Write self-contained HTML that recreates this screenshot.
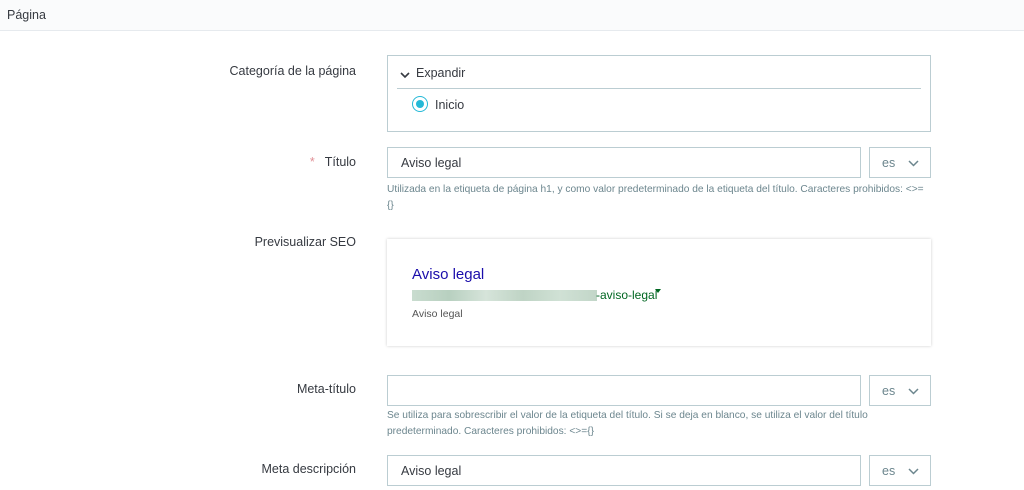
<!DOCTYPE html>
<html><head><meta charset="utf-8"><style>
body{margin:0;width:1024px;height:490px;overflow:hidden;background:#fff;font-family:"Liberation Sans",sans-serif;color:#363a41;position:relative}
.a{position:absolute}
.hdr{left:0;top:0;width:1024px;height:30px;background:#fafbfc;border-bottom:1px solid #e6eaee}
.lbl{right:668px;font-size:12.5px;text-align:right;white-space:nowrap}
.inp{left:387px;width:474px;height:31px;border:1px solid #bbcdd2;box-sizing:border-box;font-size:12.5px;padding:8px 0 0 13px}
.sel{left:869px;width:62px;height:31px;border:1px solid #bbcdd2;box-sizing:border-box;font-size:12.5px;padding:8px 0 0 12px;color:#6c868e}
.sel svg{position:absolute;left:38px;top:12px}
.help{left:387px;width:560px;font-size:10.2px;color:#6c868e;line-height:16px}
</style></head><body>
<div class="a hdr"><div class="a" style="left:7px;top:8px;font-size:12.5px">Página</div></div>

<div class="a lbl" style="top:64px">Categoría de la página</div>
<div class="a" style="left:387px;top:55px;width:544px;height:77px;border:1px solid #bbcdd2;box-sizing:border-box">
 <svg class="a" style="left:12px;top:15px" width="10" height="8" viewBox="0 0 10 8"><path d="M1 2l4 4 4-4" stroke="#363a41" stroke-width="1.6" fill="none"/></svg>
 <div class="a" style="left:28px;top:10px;font-size:12.5px">Expandir</div>
 <div class="a" style="left:9px;top:32px;width:524px;height:1px;background:#bbcdd2"></div>
 <div class="a" style="left:24px;top:40px;width:16px;height:16px;border:1.5px solid #25b9d7;border-radius:50%;box-sizing:border-box"></div>
 <div class="a" style="left:28px;top:44px;width:8px;height:8px;background:#25b9d7;border-radius:50%"></div>
 <div class="a" style="left:47px;top:42px;font-size:12.5px">Inicio</div>
</div>

<div class="a lbl" style="top:155px"><span style="color:#e08f95;margin-right:10px">*</span>Título</div>
<div class="a inp" style="top:147px">Aviso legal</div>
<div class="a sel" style="top:147px">es<svg width="11" height="7" viewBox="0 0 11 7"><path d="M1 1l4.5 4.5L10 1" stroke="#6c868e" stroke-width="1.5" fill="none"/></svg></div>
<div class="a help" style="top:182px">Utilizada en la etiqueta de página h1, y como valor predeterminado de la etiqueta del título. Caracteres prohibidos: &lt;&gt;=<br>{}</div>

<div class="a lbl" style="top:235px">Previsualizar SEO</div>
<div class="a" style="left:387px;top:239px;width:544px;height:107px;background:#fff;box-shadow:0 0 3px rgba(0,0,0,.2)">
 <div class="a" style="left:25px;top:27px;font-size:15px;color:#1a0dab">Aviso legal</div>
 <div class="a" style="left:25px;top:51px;width:185px;height:11px;background:linear-gradient(90deg,#c9dccf,#b8d0c0 20%,#d6e4da 40%,#bfd4c5 60%,#d0e1d5 80%,#c2d6c8)"></div>
 <div class="a" style="left:209px;top:49px;font-size:12px;color:#006621">-aviso-legal</div>
 <div class="a" style="left:268px;top:50px;width:0;height:0;border-left:3px solid transparent;border-right:3px solid transparent;border-top:4px solid #006621"></div>
 <div class="a" style="left:25px;top:69px;font-size:10.5px;color:#545454">Aviso legal</div>
</div>

<div class="a lbl" style="top:382px">Meta-título</div>
<div class="a inp" style="top:375px"></div>
<div class="a sel" style="top:375px">es<svg width="11" height="7" viewBox="0 0 11 7"><path d="M1 1l4.5 4.5L10 1" stroke="#6c868e" stroke-width="1.5" fill="none"/></svg></div>
<div class="a help" style="top:408px">Se utiliza para sobrescribir el valor de la etiqueta del título. Si se deja en blanco, se utiliza el valor del título<br>predeterminado. Caracteres prohibidos: &lt;&gt;={}</div>

<div class="a lbl" style="top:462px">Meta descripción</div>
<div class="a inp" style="top:455px">Aviso legal</div>
<div class="a sel" style="top:455px">es<svg width="11" height="7" viewBox="0 0 11 7"><path d="M1 1l4.5 4.5L10 1" stroke="#6c868e" stroke-width="1.5" fill="none"/></svg></div>
</body></html>
